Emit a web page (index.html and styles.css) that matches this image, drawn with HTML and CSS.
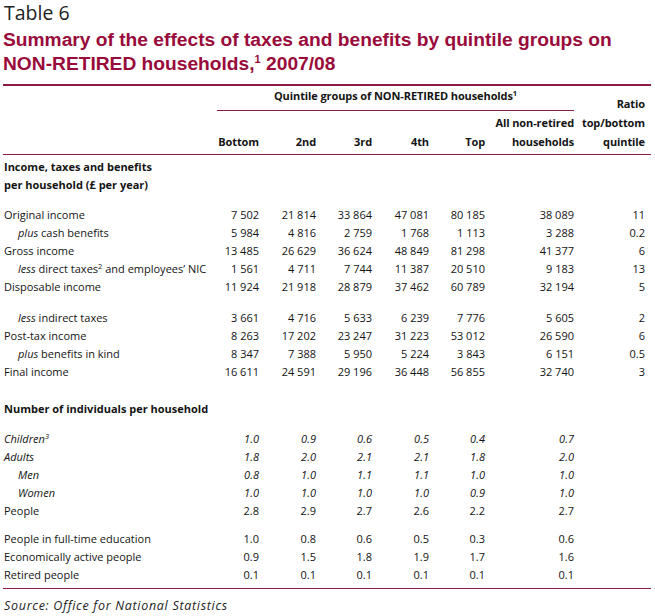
FILE: index.html
```html
<!DOCTYPE html>
<html lang="en">
<head>
<meta charset="utf-8">
<title>Table 6</title>
<link rel="stylesheet" href="styles.css">
</head>
<body>
<div class="page">
  <div class="table-no">Table 6</div>
  <h1 class="title">Summary of the effects of taxes and benefits by quintile groups on<br>NON-RETIRED households,<sup>1</sup> 2007/08</h1>
  <table class="data">
    <colgroup>
      <col class="c-label">
      <col class="c-q"><col class="c-q2"><col class="c-q"><col class="c-q2"><col class="c-q">
      <col class="c-all">
      <col class="c-ratio">
    </colgroup>
    <thead>
      <tr class="head-a">
        <th></th>
        <th colspan="6" class="span-head"><div class="span-inner">Quintile groups of NON-RETIRED households<sup>1</sup></div></th>
        <th rowspan="2" class="ratio">Ratio<br>top/bottom<br>quintile</th>
      </tr>
      <tr class="head-b">
        <th></th>
        <th>Bottom</th><th>2nd</th><th>3rd</th><th>4th</th><th>Top</th>
        <th>All non-retired<br>households</th>
      </tr>
    </thead>
    <tbody>
      <tr class="section pt3"><td colspan="8">Income, taxes and benefits</td></tr>
      <tr class="section"><td colspan="8">per household (£ per year)</td></tr>

      <tr class="pt12"><td>Original income</td><td>7 502</td><td>21 814</td><td>33 864</td><td>47 081</td><td>80 185</td><td>38 089</td><td class="r">11</td></tr>
      <tr><td class="ind"><i>plus</i> cash benefits</td><td>5 984</td><td>4 816</td><td>2 759</td><td>1 768</td><td>1 113</td><td>3 288</td><td class="r">0.2</td></tr>
      <tr><td>Gross income</td><td>13 485</td><td>26 629</td><td>36 624</td><td>48 849</td><td>81 298</td><td>41 377</td><td class="r">6</td></tr>
      <tr><td class="ind"><i>less</i> direct taxes<sup>2</sup> and employees’ NIC</td><td>1 561</td><td>4 711</td><td>7 744</td><td>11 387</td><td>20 510</td><td>9 183</td><td class="r">13</td></tr>
      <tr><td>Disposable income</td><td>11 924</td><td>21 918</td><td>28 879</td><td>37 462</td><td>60 789</td><td>32 194</td><td class="r">5</td></tr>

      <tr class="pt13"><td class="ind"><i>less</i> indirect taxes</td><td>3 661</td><td>4 716</td><td>5 633</td><td>6 239</td><td>7 776</td><td>5 605</td><td class="r">2</td></tr>
      <tr><td>Post-tax income</td><td>8 263</td><td>17 202</td><td>23 247</td><td>31 223</td><td>53 012</td><td>26 590</td><td class="r">6</td></tr>
      <tr><td class="ind"><i>plus</i> benefits in kind</td><td>8 347</td><td>7 388</td><td>5 950</td><td>5 224</td><td>3 843</td><td>6 151</td><td class="r">0.5</td></tr>
      <tr><td>Final income</td><td>16 611</td><td>24 591</td><td>29 196</td><td>36 448</td><td>56 855</td><td>32 740</td><td class="r">3</td></tr>

      <tr class="section pt19"><td colspan="8">Number of individuals per household</td></tr>

      <tr class="it pt12"><td>Children<sup>3</sup></td><td>1.0</td><td>0.9</td><td>0.6</td><td>0.5</td><td>0.4</td><td>0.7</td><td></td></tr>
      <tr class="it"><td>Adults</td><td>1.8</td><td>2.0</td><td>2.1</td><td>2.1</td><td>1.8</td><td>2.0</td><td></td></tr>
      <tr class="it"><td class="ind">Men</td><td>0.8</td><td>1.0</td><td>1.1</td><td>1.1</td><td>1.0</td><td>1.0</td><td></td></tr>
      <tr class="it"><td class="ind">Women</td><td>1.0</td><td>1.0</td><td>1.0</td><td>1.0</td><td>0.9</td><td>1.0</td><td></td></tr>
      <tr><td>People</td><td>2.8</td><td>2.9</td><td>2.7</td><td>2.6</td><td>2.2</td><td>2.7</td><td></td></tr>

      <tr class="pt10"><td>People in full-time education</td><td>1.0</td><td>0.8</td><td>0.6</td><td>0.5</td><td>0.3</td><td>0.6</td><td></td></tr>
      <tr><td>Economically active people</td><td>0.9</td><td>1.5</td><td>1.8</td><td>1.9</td><td>1.7</td><td>1.6</td><td></td></tr>
      <tr class="last"><td>Retired people</td><td>0.1</td><td>0.1</td><td>0.1</td><td>0.1</td><td>0.1</td><td>0.1</td><td></td></tr>
    </tbody>
  </table>
  <div class="source">Source: Office for National Statistics</div>
</div>
</body>
</html>
```

FILE: styles.css
```css
body {
  margin: 0;
  background: #ffffff;
  color: #141414;
  font-family: "Open Sans", "Liberation Sans", sans-serif;
}

.page {
  width: 648px;
  padding: 2px 4px 0 3px;
}

.table-no {
  font-size: 19.5px;
  line-height: 22px;
  color: #222222;
  padding-left: 1px;
}

.title {
  margin: 4px 0 0;
  font: bold 19.2px/24px "Liberation Sans", Arial, sans-serif;
  color: #990b3b;
}

.title sup {
  font-size: 11px;
  line-height: 0;
  vertical-align: 7px;
}

sup {
  font-size: 0.68em;
  line-height: 0;
  vertical-align: 4px;
}

.data {
  margin-top: 8px;
  width: 648px;
  border-collapse: collapse;
  table-layout: fixed;
  font-size: 11px;
}

.c-label { width: 200px; }
.c-q { width: 56px; }
.c-q2 { width: 57px; }
.c-all { width: 89px; }
.c-ratio { width: 77px; }

.data th {
  font-weight: 700;
  letter-spacing: -0.1px;
  text-align: right;
  padding: 0;
  vertical-align: bottom;
}

.head-a th {
  border-top: 2px solid #8c1d40;
}

.span-inner {
  margin-left: 14px;
  padding: 1px 0 5px;
  line-height: 18px;
  text-align: center;
  border-bottom: 1px solid #8c1d40;
}

.head-b th,
.data th.ratio {
  line-height: 19px;
  padding: 2px 0 3px;
  border-bottom: 1px solid #8c1d40;
}

.data th.ratio {
  padding-right: 6px;
}

.data td {
  padding: 0;
  height: 18px;
  line-height: 18px;
  text-align: right;
  white-space: nowrap;
}

.data td:first-child {
  text-align: left;
  padding-left: 1px;
}

.data td.ind {
  padding-left: 15px;
}

.data td.r {
  padding-right: 6px;
}

.section td {
  font-weight: 700;
  letter-spacing: 0;
}

.it td {
  font-style: italic;
}

.pt3 td { padding-top: 3px; }
.pt10 td { padding-top: 10px; }
.pt12 td { padding-top: 12px; }
.pt13 td { padding-top: 13px; }
.pt19 td { padding-top: 19px; }

.last td {
  padding-bottom: 4px;
  border-bottom: 1px solid #8c1d40;
}

.source {
  margin-top: 7px;
  padding-left: 1px;
  font-size: 12.5px;
  line-height: 20px;
  font-style: italic;
  letter-spacing: 0.7px;
  color: #222222;
}
```
